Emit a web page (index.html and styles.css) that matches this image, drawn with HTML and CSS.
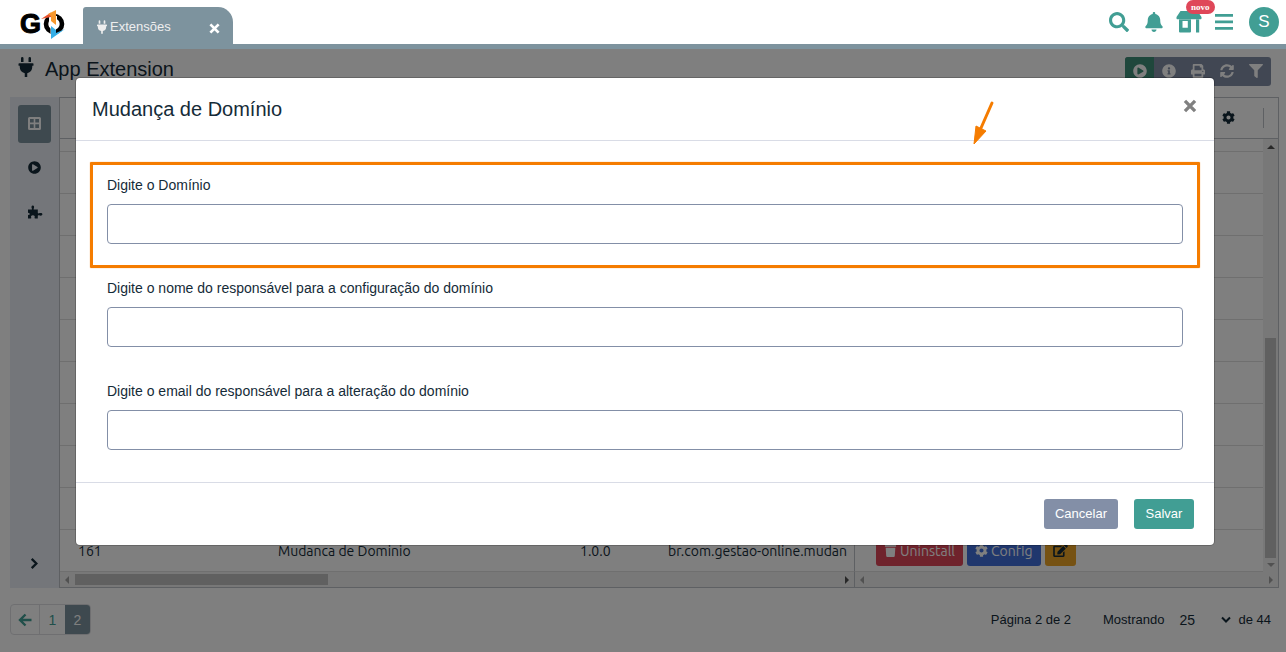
FILE: index.html
```html
<!DOCTYPE html>
<html lang="pt-BR">
<head>
<meta charset="utf-8">
<meta name="viewport" content="width=device-width, initial-scale=1">
<title>App Extension</title>
<link rel="stylesheet" href="styles.css">
</head>
<body>
<svg class="sprite" aria-hidden="true">
  <symbol id="plug" viewBox="0 0 384 512"><path d="M320,32a32,32,0,0,0-64,0v96h64Zm48,128H16A16,16,0,0,0,0,176v32a16,16,0,0,0,16,16H32v32A160.07,160.07,0,0,0,160,412.8V512h64V412.8A160.07,160.07,0,0,0,352,256V224h16a16,16,0,0,0,16-16V176A16,16,0,0,0,368,160ZM128,32a32,32,0,0,0-64,0v96h64Z"/></symbol>
  <symbol id="play" viewBox="0 0 512 512"><path d="M256 8C119 8 8 119 8 256s111 248 248 248 248-111 248-248S393 8 256 8zm115.7 272l-176 101c-15.8 8.8-35.7-2.5-35.7-21V152c0-18.4 19.8-29.8 35.7-21l176 107c16.4 9.2 16.4 32.9 0 42z"/></symbol>
  <symbol id="info" viewBox="0 0 512 512"><path d="M256 8C119.043 8 8 119.083 8 256c0 136.997 111.043 248 248 248s248-111.003 248-248C504 119.083 392.957 8 256 8zm0 110c23.196 0 42 18.804 42 42s-18.804 42-42 42-42-18.804-42-42 18.804-42 42-42zm56 254c0 6.627-5.373 12-12 12h-88c-6.627 0-12-5.373-12-12v-24c0-6.627 5.373-12 12-12h12v-64h-12c-6.627 0-12-5.373-12-12v-24c0-6.627 5.373-12 12-12h64c6.627 0 12 5.373 12 12v100h12c6.627 0 12 5.373 12 12v24z"/></symbol>
  <symbol id="print" viewBox="0 0 512 512"><path d="M448 192V77.25c0-8.49-3.37-16.62-9.37-22.63L393.37 9.37c-6-6-14.14-9.37-22.63-9.37H96C78.33 0 64 14.33 64 32v160c-35.35 0-64 28.65-64 64v112c0 8.84 7.16 16 16 16h48v96c0 17.67 14.33 32 32 32h320c17.67 0 32-14.33 32-32v-96h48c8.84 0 16-7.16 16-16V256c0-35.35-28.65-64-64-64zm-64 256H128v-96h256v96zm0-224H128V64h192v48c0 8.84 7.16 16 16 16h48v96zm48 72c-13.25 0-24-10.75-24-24 0-13.26 10.75-24 24-24s24 10.74 24 24c0 13.25-10.75 24-24 24z"/></symbol>
  <symbol id="sync" viewBox="0 0 512 512"><path d="M370.72 133.28C339.458 104.008 298.888 87.962 255.848 88c-77.458.068-144.328 53.178-162.791 126.85-1.344 5.363-6.122 9.15-11.651 9.15H24.103c-7.498 0-13.194-6.807-11.807-14.176C33.933 94.924 134.813 8 256 8c66.448 0 126.791 26.136 171.315 68.685L463.03 40.97C478.149 25.851 504 36.559 504 57.941V192c0 13.255-10.745 24-24 24H345.941c-21.382 0-32.09-25.851-16.971-40.971l41.75-41.749zM32 296h134.059c21.382 0 32.09 25.851 16.971 40.971l-41.75 41.75c31.262 29.273 71.835 45.319 114.876 45.28 77.418-.07 144.315-53.144 162.787-126.849 1.344-5.363 6.122-9.15 11.651-9.15h57.304c7.498 0 13.194 6.807 11.807 14.176C478.067 417.076 377.187 504 256 504c-66.448 0-126.791-26.136-171.315-68.685L48.97 471.03C33.851 486.149 8 475.441 8 454.059V320c0-13.255 10.745-24 24-24z"/></symbol>
  <symbol id="filter" viewBox="0 0 512 512"><path d="M487.976 0H24.028C2.71 0-8.047 25.866 7.058 40.971L192 225.941V432c0 7.831 3.821 15.17 10.237 19.662l80 55.98C298.02 518.69 320 507.493 320 487.98V225.941l184.947-184.97C520.021 25.896 509.338 0 487.976 0z"/></symbol>
  <symbol id="search" viewBox="0 0 512 512"><path d="M505 442.7L405.3 343c-4.5-4.5-10.6-7-17-7H372c27.6-35.3 44-79.7 44-128C416 93.1 322.9 0 208 0S0 93.1 0 208s93.1 208 208 208c48.3 0 92.7-16.4 128-44v16.3c0 6.4 2.5 12.5 7 17l99.7 99.7c9.4 9.4 24.6 9.4 33.9 0l28.3-28.3c9.4-9.4 9.4-24.6.1-34zM208 336c-70.7 0-128-57.2-128-128 0-70.7 57.2-128 128-128 70.7 0 128 57.2 128 128 0 70.7-57.2 128-128 128z"/></symbol>
  <symbol id="bell" viewBox="0 0 448 512"><path d="M224 512c35.32 0 63.97-28.65 63.97-64H160.03c0 35.35 28.65 64 63.97 64zm215.39-149.71c-19.32-20.76-55.47-51.99-55.47-154.29 0-77.7-54.48-139.9-127.94-155.16V32c0-17.67-14.32-32-31.98-32s-31.98 14.33-31.98 32v20.84C118.56 68.1 64.08 130.3 64.08 208c0 102.3-36.15 133.53-55.47 154.29-6 6.45-8.66 14.16-8.61 21.71.11 16.4 12.98 32 32.1 32h383.8c19.12 0 32-15.6 32.1-32 .05-7.55-2.61-15.27-8.61-21.71z"/></symbol>
  <symbol id="cog" viewBox="0 0 512 512"><path d="M487.4 315.7l-42.6-24.6c4.3-23.2 4.3-47 0-70.2l42.6-24.6c4.9-2.8 7.1-8.6 5.5-14-11.1-35.6-30-67.8-54.7-94.6-3.8-4.1-10-5.1-14.8-2.3L380.8 110c-17.9-15.4-38.5-27.3-60.8-35.1V25.8c0-5.6-3.9-10.5-9.4-11.7-36.7-8.2-74.3-7.8-109.2 0-5.5 1.2-9.4 6.1-9.4 11.7V75c-22.2 7.9-42.8 19.8-60.8 35.1L88.7 85.5c-4.9-2.8-11-1.9-14.8 2.3-24.7 26.7-43.6 58.9-54.7 94.6-1.7 5.4.6 11.2 5.5 14L67.3 221c-4.3 23.2-4.3 47 0 70.2l-42.6 24.6c-4.9 2.8-7.1 8.6-5.5 14 11.1 35.6 30 67.8 54.7 94.6 3.8 4.1 10 5.1 14.8 2.3l42.6-24.6c17.9 15.4 38.5 27.3 60.8 35.1v49.2c0 5.6 3.9 10.5 9.4 11.7 36.7 8.2 74.3 7.8 109.2 0 5.5-1.2 9.4-6.1 9.4-11.7v-49.2c22.2-7.9 42.8-19.8 60.8-35.1l42.6 24.6c4.9 2.8 11 1.9 14.8-2.3 24.7-26.7 43.6-58.9 54.7-94.6 1.5-5.5-.7-11.3-5.6-14.1zM256 336c-44.1 0-80-35.9-80-80s35.9-80 80-80 80 35.9 80 80-35.9 80-80 80z"/></symbol>
  <symbol id="edit" viewBox="0 0 576 512"><path d="M402.6 83.2l90.2 90.2c3.8 3.8 3.8 10 0 13.8L274.4 405.6l-92.8 10.3c-12.4 1.4-22.9-9.1-21.5-21.5l10.3-92.8L388.8 83.2c3.8-3.8 10-3.8 13.8 0zm162-22.9l-48.8-48.8c-15.2-15.2-39.9-15.2-55.2 0l-35.4 35.4c-3.8 3.8-3.8 10 0 13.8l90.2 90.2c3.8 3.8 10 3.8 13.8 0l35.4-35.4c15.2-15.3 15.2-40 0-55.2zM384 346.2V448H64V128h229.8c3.2 0 6.2-1.3 8.5-3.5l40-40c7.6-7.6 2.2-20.5-8.5-20.5H48C21.5 64 0 85.5 0 112v352c0 26.5 21.5 48 48 48h352c26.5 0 48-21.5 48-48V306.2c0-10.7-12.9-16-20.5-8.5l-40 40c-2.2 2.3-3.5 5.3-3.5 8.5z"/></symbol>
  <symbol id="trash" viewBox="0 0 12 14"><path d="M0 1.5q0-.6.6-.6H3.500L4 0h4l.5.9h2.900q.6 0 .6.6V3H0zM.8 4h10.400l-.6 9q-.1 1-1.100 1h-7q-1 0-1.100-1z"/></symbol>
  <symbol id="store" viewBox="0 0 26 22"><path fill-rule="evenodd" d="M4.500 0h17l4 6v1.500q0 .8-.8.8H1.300Q.5 8.300.5 7.500V6zM3 8h12v12.500q0 1-1 1H4q-1 0-1-1zM6.500 10v6.800h5.300V10zM20 8h3.200v13.500H20z"/></symbol>
  <symbol id="bars" viewBox="0 0 20 16"><path d="M1 0h18v2.800H1zM1 6.500h18v2.800H1zM1 13h18v2.800H1z"/></symbol>
  <symbol id="grid" viewBox="0 0 13 13"><path fill-rule="evenodd" d="M1.500 0h10Q13 0 13 1.500v10q0 1.500-1.500 1.500h-10Q0 13 0 11.500v-10Q0 0 1.500 0zM2 2v3.500h3.700V2zm5.300 0v3.500H11V2zM2 7.300V11h3.700V7.300zm5.300 0V11H11V7.300z"/></symbol>
  <symbol id="puzzle" viewBox="0 0 16 14"><path d="M1 4.500h3.600c.5 0 .4-.6.200-1C4.200 2.200 4.400.6 5.800.5c1.400.1 1.600 1.700 1 3-.2.400-.3 1 .2 1h3.800v3.300c0 .7.700.7 1.200.5 1.500-.7 3.400-.5 3.400 1s-1.900 1.700-3.400 1c-.5-.2-1.200-.2-1.200.5v2.700H8c-.5 0-.6-.4-.4-.9.500-1.200 0-2.300-1.700-2.300s-2.200 1.100-1.700 2.300c.2.500.1.900-.4.900H1v-3c0-.6.300-.7.800-.6 1.200.1 1.200-2.100 0-2-.5.100-.8 0-.8-.6z"/></symbol>
  <symbol id="times" viewBox="0 0 12 12"><path d="M2.200 2.200l7.600 7.600m0-7.600l-7.600 7.600" fill="none" stroke="currentColor" stroke-width="2.500"/></symbol>
  <symbol id="chevron-right" viewBox="0 0 10 14"><path d="M2 2l5 5-5 5" fill="none" stroke="currentColor" stroke-width="2.500"/></symbol>
  <symbol id="chevron-down" viewBox="0 0 10 8"><path d="M1 1.500l4 4 4-4" fill="none" stroke="currentColor" stroke-width="2"/></symbol>
  <symbol id="arrow-left" viewBox="0 0 14 14"><path d="M7.500 1.500L2 7l5.500 5.500M2 7h11.500" fill="none" stroke="currentColor" stroke-width="2.400"/></symbol>
  <symbol id="caret-left" viewBox="0 0 4 8"><path d="M4 0v8L0 4z"/></symbol>
  <symbol id="caret-right" viewBox="0 0 4 8"><path d="M0 0v8l4-4z"/></symbol>
  <symbol id="caret-up" viewBox="0 0 8 4"><path d="M0 4h8L4 0z"/></symbol>
  <symbol id="caret-down" viewBox="0 0 8 4"><path d="M0 0h8L4 4z"/></symbol>
</svg>

<header class="topbar">
  <a class="logo" href="#" aria-label="GO">
    <svg viewBox="0 0 48 32" width="48" height="32">
      <text class="logo-letter" x="0" y="25">G</text>
      <circle cx="34" cy="16" r="8" fill="none" stroke="#000" stroke-width="4.600"/>
      <path d="M29 8h8v11h-8zM30.500 16h5.500v12h-5.500z" fill="#fff"/>
      <path d="M21 11L31 4.500V9z" fill="#e8532f"/>
      <path d="M28 6L36 2v15l-5-4V8z" fill="#f7982d"/>
      <path d="M31 18l5 4v3l9-4-14 10z" fill="#35aee6"/>
    </svg>
  </a>
  <div class="tab">
    <svg class="tab-plug"><use href="#plug"/></svg>
    <span class="tab-label">Extensões</span>
    <button class="tab-close" type="button" aria-label="Fechar aba"><svg><use href="#times"/></svg></button>
  </div>
  <nav class="top-actions">
    <button type="button" aria-label="Buscar"><svg class="i20"><use href="#search"/></svg></button>
    <button type="button" aria-label="Notificações"><svg class="i20"><use href="#bell"/></svg></button>
    <button class="store" type="button"><svg class="store-icon"><use href="#store"/></svg><span class="badge">novo</span></button>
    <button type="button" aria-label="Menu"><svg class="i20"><use href="#bars"/></svg></button>
    <button class="avatar" type="button">S</button>
  </nav>
</header>

<main class="page">
  <div class="title-row">
    <svg class="title-plug"><use href="#plug"/></svg>
    <h1>App Extension</h1>
    <div class="toolbar">
      <button class="run" type="button" aria-label="Executar"><svg><use href="#play"/></svg></button>
      <button type="button" aria-label="Informações"><svg><use href="#info"/></svg></button>
      <button type="button" aria-label="Imprimir"><svg><use href="#print"/></svg></button>
      <button type="button" aria-label="Atualizar"><svg><use href="#sync"/></svg></button>
      <button type="button" aria-label="Filtrar"><svg><use href="#filter"/></svg></button>
    </div>
  </div>

  <div class="workspace">
    <aside class="sidebar">
      <button class="active" type="button" aria-label="Grade"><svg><use href="#grid"/></svg></button>
      <button type="button" aria-label="Executar"><svg><use href="#play"/></svg></button>
      <button type="button" aria-label="Extensões"><svg class="puzzle"><use href="#puzzle"/></svg></button>
      <button class="expand" type="button" aria-label="Expandir"><svg><use href="#chevron-right"/></svg></button>
    </aside>
    <section class="data-grid">
      <div class="grid-head">
        <button type="button" aria-label="Configurar colunas"><svg><use href="#cog"/></svg></button>
        <span class="separator"></span>
      </div>
      <div class="grid-body">
        <table>
          <colgroup><col class="c-id"><col class="c-name"><col class="c-version"><col><col class="c-actions"></colgroup>
          <tbody>
            <tr class="partial"><td></td><td></td><td></td><td></td><td></td></tr>
            <tr><td></td><td></td><td></td><td></td><td></td></tr>
            <tr><td></td><td></td><td></td><td></td><td></td></tr>
            <tr><td></td><td></td><td></td><td></td><td></td></tr>
            <tr><td></td><td></td><td></td><td></td><td></td></tr>
            <tr><td></td><td></td><td></td><td></td><td></td></tr>
            <tr><td></td><td></td><td></td><td></td><td></td></tr>
            <tr><td></td><td></td><td></td><td></td><td></td></tr>
            <tr><td></td><td></td><td></td><td></td><td></td></tr>
            <tr><td></td><td></td><td></td><td></td><td></td></tr>
            <tr>
              <td>161</td><td>Mudanca de Dominio</td><td>1.0.0</td><td>br.com.gestao-online.mudan</td>
              <td><div class="row-actions">
                <button class="danger" type="button"><svg><use href="#trash"/></svg>Uninstall</button>
                <button class="primary" type="button"><svg><use href="#cog"/></svg>Config</button>
                <button class="warning" type="button" aria-label="Editar"><svg><use href="#edit"/></svg></button>
              </div></td>
            </tr>
          </tbody>
        </table>
        <div class="vscroll">
          <svg class="caret-v on"><use href="#caret-up"/></svg>
          <span class="vthumb"></span>
          <svg class="caret-v"><use href="#caret-down"/></svg>
        </div>
      </div>
      <div class="hscrolls">
        <div class="hscroll">
          <svg class="caret-h"><use href="#caret-left"/></svg>
          <span class="hthumb"></span>
          <svg class="caret-h on"><use href="#caret-right"/></svg>
        </div>
        <div class="hscroll pinned">
          <svg class="caret-h"><use href="#caret-left"/></svg>
          <svg class="caret-h"><use href="#caret-right"/></svg>
        </div>
      </div>
    </section>
  </div>

  <footer class="pager">
    <nav class="pages">
      <a href="#" aria-label="Anterior"><svg><use href="#arrow-left"/></svg></a>
      <a href="#">1</a>
      <a class="current" href="#">2</a>
    </nav>
    <span class="page-info">Página 2 de 2</span>
    <label for="page-size">Mostrando</label>
    <span class="select-wrap">
      <select id="page-size"><option>25</option></select>
      <svg><use href="#chevron-down"/></svg>
    </span>
    <span>de 44</span>
  </footer>

  <div class="backdrop">
    <form class="modal" role="dialog" aria-labelledby="modal-title">
      <div class="modal-head">
        <h2 id="modal-title">Mudança de Domínio</h2>
        <button class="modal-close" type="button" aria-label="Fechar"><svg><use href="#times"/></svg></button>
      </div>
      <div class="modal-body">
        <div class="field highlighted">
          <label for="domain">Digite o Domínio</label>
          <input id="domain" type="text">
        </div>
        <div class="field">
          <label for="owner">Digite o nome do responsável para a configuração do domínio</label>
          <input id="owner" type="text">
        </div>
        <div class="field">
          <label for="email">Digite o email do responsável para a alteração do domínio</label>
          <input id="email" type="text">
        </div>
      </div>
      <div class="modal-foot">
        <button class="cancel" type="button">Cancelar</button>
        <button class="save" type="submit">Salvar</button>
      </div>
      <svg class="pointer" viewBox="0 0 24 48" aria-hidden="true">
        <path d="M20 5L9 30" stroke="#f57c00" stroke-width="3" stroke-linecap="round"/>
        <path d="M2 46L4 28l10 5z" fill="#f57c00" stroke="#f57c00"/>
      </svg>
    </form>
  </div>
</main>
</body>
</html>
```
FILE: styles.css
```css
:root {
  --ink: #152b38;
  --teal: #419e94;
  --slate: #7d939e;
  --gray: #838fa7;
  --line: #d9dce6;
}

* { box-sizing: border-box; }

body {
  margin: 0;
  min-height: 100vh;
  display: flex;
  flex-direction: column;
  background: #fff;
  color: var(--ink);
  font-family: "Liberation Sans", Arial, sans-serif;
  font-size: 13px;
}

button {
  display: inline-flex;
  align-items: center;
  justify-content: center;
  padding: 0;
  border: 0;
  background: none;
  color: inherit;
  font: inherit;
}

svg { display: block; fill: currentColor; }
h1, h2 { margin: 0; font-size: 20px; font-weight: 400; line-height: 24px; }
.sprite { position: absolute; width: 0; height: 0; }

/* Top bar */
.topbar {
  display: flex;
  height: 49px;
  padding: 0 7px 0 20px;
  border-bottom: 5px solid var(--slate);
}
.logo { width: 63px; padding-top: 8px; }
.logo-letter {
  font: bold 27px "Liberation Sans", Arial, sans-serif;
  fill: #000;
  stroke: #000;
  stroke-width: 1px;
}
.tab {
  display: flex;
  align-items: center;
  gap: 3px;
  width: 150px;
  margin-top: 7px;
  padding: 3px 12px 0 14px;
  border-radius: 3px 15px 0 0;
  background: var(--slate);
  color: #eee;
}
.tab-plug { width: 10px; height: 14px; }
.tab-label { flex: 1; line-height: 16px; }
.tab-close { padding-top: 2px; color: #fff; }
.tab-close svg { width: 13px; height: 13px; }
.top-actions {
  display: flex;
  align-items: center;
  margin-left: auto;
  color: var(--teal);
}
.top-actions button { width: 35px; }
.i20 { width: 20px; height: 20px; }
.store { position: relative; }
.store-icon { width: 26px; height: 22px; }
.badge {
  position: absolute;
  left: 15px;
  top: -11px;
  padding: 0 5px;
  border-radius: 7px;
  background: #df4759;
  color: #fff;
  font: bold 9px/14px "Liberation Serif", serif;
}
.top-actions .avatar {
  width: 30px;
  height: 30px;
  margin-left: 8px;
  border-radius: 50%;
  background: var(--teal);
  color: #fff;
  font-size: 17px;
}

/* Page */
.page {
  position: relative;
  flex: 1;
  display: flex;
  flex-direction: column;
  padding: 8px 7px 17px 10px;
}
.title-row { display: flex; gap: 11px; padding: 0 8px; margin-bottom: 11px; }
.title-plug { width: 16px; height: 20px; }
.toolbar {
  display: flex;
  margin-left: auto;
  padding-right: 1px;
  border-radius: 3px;
  overflow: hidden;
  background: var(--gray);
  color: #fff;
}
.toolbar button { width: 29px; height: 29px; padding-bottom: 1px; }
.toolbar .run { background: #3f8f78; }
.toolbar svg { width: 14px; height: 14px; }

.workspace { flex: 1; display: flex; }
.sidebar {
  display: flex;
  flex-direction: column;
  gap: 6px;
  width: 49px;
  padding: 8px 8px 5px;
  background: #e9edf4;
}
.sidebar button { height: 38px; padding-bottom: 1px; border-radius: 3px; }
.sidebar .active { background: var(--slate); color: #fff; }
.sidebar svg { width: 13px; height: 13px; }
.sidebar svg.puzzle { width: 16px; height: 14px; }
.sidebar .expand { margin-top: auto; }

.data-grid {
  flex: 1;
  display: flex;
  flex-direction: column;
  border: 1px solid #bdc0c6;
  min-width: 0;
}
.grid-head {
  display: flex;
  align-items: center;
  justify-content: flex-end;
  gap: 28px;
  height: 41px;
  padding: 0 14px 1px 0;
  border-bottom: 1px solid #bdc0c6;
}
.grid-head svg { width: 13px; height: 13px; }
.separator { width: 1px; height: 20px; background: #bdc0c6; }
.grid-body { display: flex; }
table {
  flex: 1;
  width: 0;
  table-layout: fixed;
  border-collapse: separate;
  border-spacing: 0;
  font-family: Ubuntu, "Noto Sans", sans-serif;
  font-size: 14px;
}
.c-id { width: 200px; }
.c-name { width: 302px; }
.c-version { width: 88px; }
.c-actions { width: 409px; }
td {
  height: 42px;
  padding: 0 0 0 18px;
  border-bottom: 1px solid #dedede;
  white-space: nowrap;
}
td:last-child { padding-left: 21px; border-left: 1px solid #bdc0c6; }
.partial td { height: 13px; }
.row-actions { display: flex; gap: 4px; }
.row-actions button { gap: 3px; height: 30px; padding: 0 8px; border-radius: 3px; color: #fff; }
.row-actions svg { width: 13px; height: 13px; }
.row-actions .danger { background: #df4759; }
.row-actions .primary { background: #416fdb; }
.row-actions .warning { background: #eda427; color: var(--ink); }
.row-actions .warning svg { width: 15px; }

.vscroll {
  display: flex;
  flex-direction: column;
  align-items: center;
  width: 15px;
  padding: 6px 0 5px;
  background: #f1f1f1;
  color: #a3a3a3;
}
.caret-v { width: 8px; height: 4px; }
.caret-h { width: 4px; height: 8px; }
.on { color: #505050; }
.vthumb { width: 11px; height: 220px; margin: auto 0 5px; background: #c1c1c1; }
.hscrolls { display: flex; height: 15px; background: #f1f1f1; color: #a3a3a3; }
.hscroll { flex: 1; display: flex; align-items: center; justify-content: space-between; padding: 0 5px; }
.pinned { flex: 0 0 424px; border-left: 1px solid #bdc0c6; }
.hthumb { width: 253px; height: 11px; margin: 0 auto 0 6px; background: #c1c1c1; }

/* Pager */
.pager { display: flex; align-items: center; margin-top: 16px; padding-right: 8px; }
.pages { display: flex; margin-right: auto; border: 1px solid #dedfe3; border-radius: 4px; overflow: hidden; }
.pages a {
  display: flex;
  align-items: center;
  justify-content: center;
  width: 25px;
  height: 29px;
  color: var(--teal);
  font-size: 14px;
  text-decoration: none;
}
.pages a:first-child { width: 29px; border-right: 1px solid #dedfe3; }
.pages .current { background: var(--slate); color: #fff; }
.pages svg { width: 14px; height: 14px; }
.page-info { margin-right: 32px; }
.select-wrap { position: relative; width: 60px; margin: 0 7px; }
.select-wrap select {
  width: 100%;
  padding: 0 8px;
  border: 0;
  appearance: none;
  background: none;
  color: inherit;
  font: inherit;
  font-size: 14px;
}
.select-wrap svg { position: absolute; right: 0; top: 4px; width: 10px; height: 8px; pointer-events: none; }

/* Modal */
.backdrop {
  position: absolute;
  inset: 0;
  padding: 29px 72px 0 76px;
  background: rgba(0, 0, 0, .5);
}
.modal {
  position: relative;
  border-radius: 4px;
  background: #fff;
  box-shadow: 0 0 0 1px rgba(0, 0, 0, .2);
}
.modal-head {
  display: flex;
  justify-content: space-between;
  height: 63px;
  padding: 19px 16px;
  border-bottom: 1px solid var(--line);
}
.modal-close { height: 18px; color: #808080; }
.modal-close svg { width: 16px; height: 16px; }
.modal-body { display: grid; gap: 34px; padding: 34px 31px 32px; }
.field { position: relative; display: grid; gap: 8px; font-size: 14px; line-height: 21px; }
.field input {
  width: 100%;
  height: 40px;
  padding: 0 12px;
  border: 1px solid var(--gray);
  border-radius: 4px;
  background: #fff;
  font: inherit;
}
.highlighted::after {
  content: "";
  position: absolute;
  inset: -13px -17px -24px;
  border: 3px solid #f57c00;
  border-radius: 1px;
  box-shadow: 0 0 1px #f57c00;
  pointer-events: none;
}
.modal-foot {
  display: flex;
  justify-content: flex-end;
  gap: 16px;
  padding: 16px 20px;
  border-top: 1px solid var(--line);
}
.modal-foot button { min-width: 60px; height: 30px; padding: 0 11px 1px; border-radius: 3px; color: #fff; }
.cancel { background: var(--gray); }
.save { background: var(--teal); }
.pointer { position: absolute; right: 218px; top: 20px; width: 24px; height: 48px; }
```
